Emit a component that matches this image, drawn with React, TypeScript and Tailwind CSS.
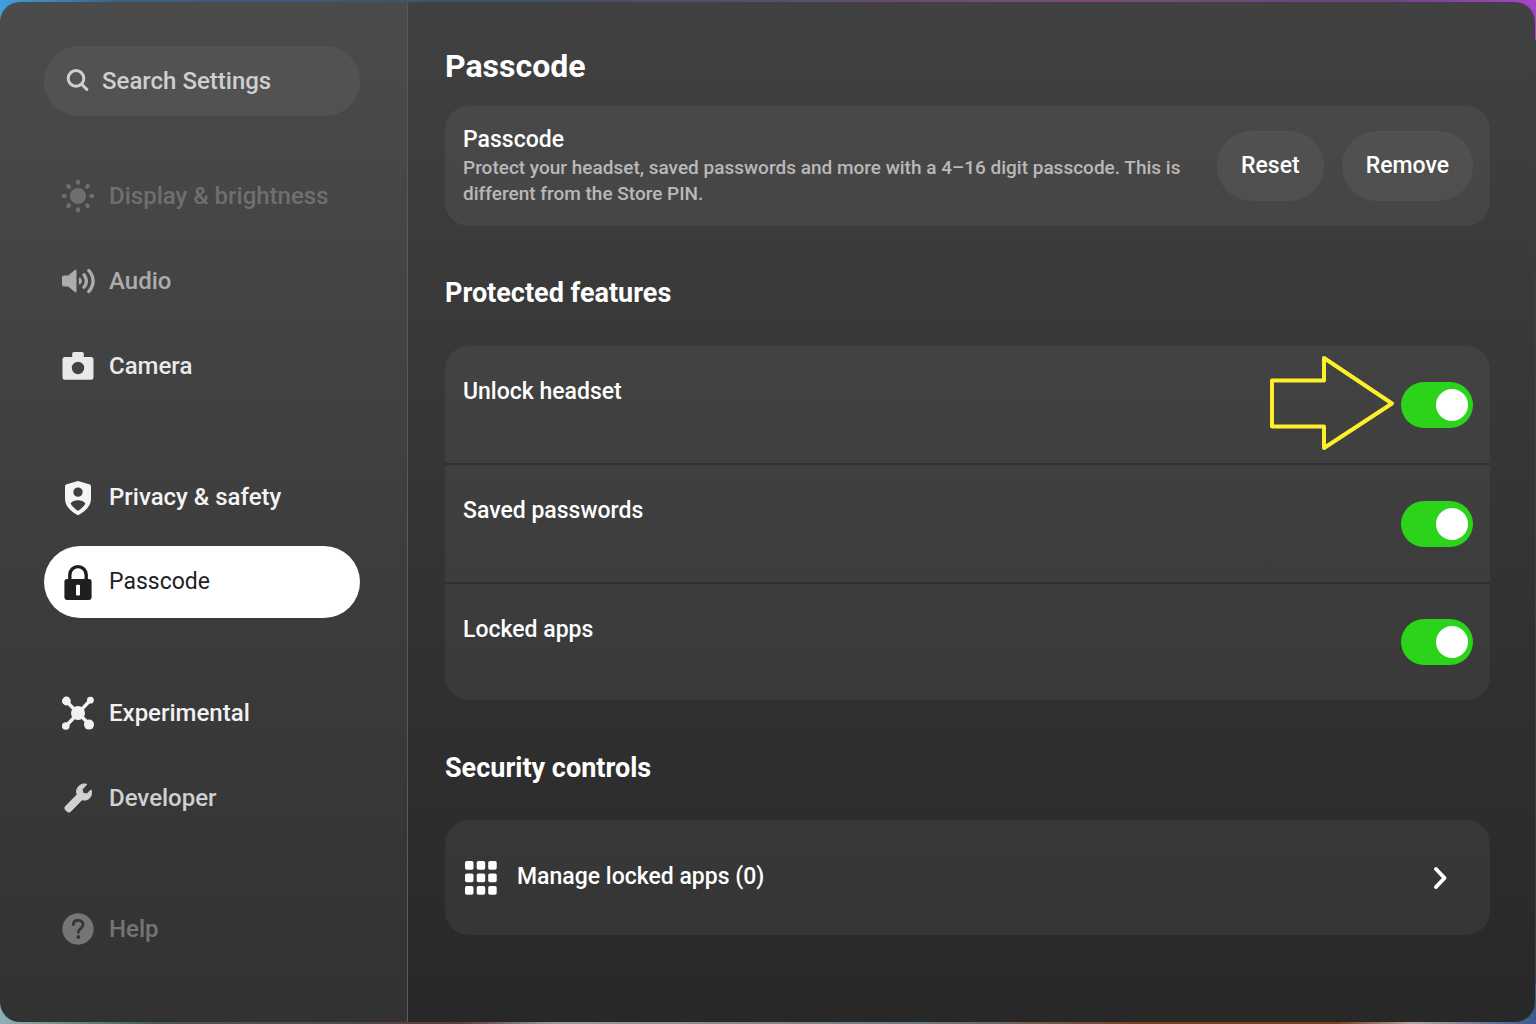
import { useState, type ReactNode } from "react";

type NavItem = { label: string; icon: ReactNode; tone: string; active?: boolean };

const SunIcon = () => (
  <svg viewBox="0 0 32 32" className="size-8 shrink-0 overflow-visible" aria-hidden="true">
    <circle cx="16" cy="16" r="8" fill="currentColor" />
    <path
      d="M16 1.600v1.200M16 29.200v1.200M1.600 16h1.200M29.200 16h1.200M6.200 6l.8.8M25 6.800l.8-.8M6.200 26l.8-.8M25 25.200l.8.8"
      stroke="currentColor"
      strokeWidth="4"
      strokeLinecap="round"
    />
  </svg>
);

const AudioIcon = () => (
  <svg viewBox="0 0 32 32" className="size-8 shrink-0 overflow-visible" aria-hidden="true">
    <path
      d="M2 10.500h4.200l6.600-5.600c.9-.7 1.700-.4 1.700.8v20.600c0 1.200-.8 1.500-1.700.8l-6.600-5.600H2c-1.200 0-2-.8-2-2v-7c0-1.200.8-2 2-2z"
      fill="currentColor"
    />
    <path d="M17.800 13.400a3.400 3.400 0 0 1 0 5.200z" fill="currentColor" stroke="currentColor" strokeWidth="1.800" strokeLinejoin="round" />
    <path
      d="M22 9.800c3.200 3.600 3.200 8.800 0 12.400M26.800 5.500c5.700 6.500 5.700 14.500 0 21"
      fill="none"
      stroke="currentColor"
      strokeWidth="3.400"
      strokeLinecap="round"
    />
  </svg>
);

const CameraIcon = () => (
  <svg viewBox="0 0 32 32" className="size-8 shrink-0" aria-hidden="true">
    <path
      fill="currentColor"
      fillRule="evenodd"
      d="M12 2h8a1.800 1.800 0 0 1 1.800 1.800V7H29a2.500 2.500 0 0 1 2.500 2.500v17.700a2.500 2.500 0 0 1-2.500 2.500H3A2.500 2.500 0 0 1 .5 27.200V9.500A2.500 2.500 0 0 1 3 7h7.200V3.800A1.800 1.800 0 0 1 12 2zm4 9.800a6.200 6.200 0 1 0 0 12.400 6.200 6.200 0 0 0 0-12.400z"
    />
  </svg>
);

const ShieldIcon = () => (
  <svg viewBox="0 0 32 32" className="size-8 shrink-0 overflow-visible" aria-hidden="true">
    <path
      fill="currentColor"
      fillRule="evenodd"
      d="M16 0 27.200 3.200c1.200.4 1.800 1 1.800 2.200v12.400c0 7.600-6 12.800-13 16.400-7-3.600-13-8.800-13-16.400V5.400c0-1.200.6-1.800 1.800-2.200zM16 6.400a4.700 4.700 0 1 0 0 9.400 4.700 4.700 0 0 0 0-9.400zM8.600 22.600c1.600 3.100 4.200 5.300 7.400 7.100 3.200-1.800 5.800-4 7.400-7.100-1.500-2.200-4.200-3.300-7.400-3.300S10.100 20.400 8.600 22.600z"
    />
  </svg>
);

const LockIcon = () => (
  <svg viewBox="0 0 32 32" className="size-8 shrink-0 overflow-visible" aria-hidden="true">
    <path d="M7.800 14V8.800a8.200 8.200 0 0 1 16.400 0V14" fill="none" stroke="currentColor" strokeWidth="3.400" />
    <path
      fill="currentColor"
      fillRule="evenodd"
      d="M5 13h22a2.600 2.600 0 0 1 2.600 2.600v16a2.400 2.400 0 0 1-2.400 2.400H4.800a2.400 2.400 0 0 1-2.400-2.400v-16A2.600 2.600 0 0 1 5 13zm9 6.800v8.700a1 1 0 0 0 1 1h2a1 1 0 0 0 1-1v-8.700a1 1 0 0 0-1-1h-2a1 1 0 0 0-1 1z"
    />
  </svg>
);

const NodesIcon = () => (
  <svg viewBox="0 0 32 32" className="size-8 shrink-0 overflow-visible" fill="currentColor" aria-hidden="true">
    <path d="M4 4l24 24M28 3.500L4 29" stroke="currentColor" strokeWidth="3.400" />
    <circle cx="16" cy="16" r="7" />
    <circle cx="4.400" cy="4" r="4.400" />
    <circle cx="28.400" cy="3.200" r="3.400" />
    <circle cx="3.800" cy="29" r="3.800" />
    <circle cx="27" cy="27.600" r="5" />
  </svg>
);

const WrenchIcon = () => (
  <svg viewBox="0 0 32 32" className="size-8 shrink-0" aria-hidden="true">
    <path
      fill="currentColor"
      stroke="currentColor"
      strokeLinejoin="round"
      d="M24.800 2.300c-3.200-1-7 .1-9 3.200-1.400 2.200-1.500 4.700-.7 7.100L3.900 23.900c-1.300 1.300-1.300 2.900-.1 4.300l1 1c1.300 1.200 2.900 1.200 4.200-.1L20 17.700c2.300.8 5 .5 7.100-1.200 2.300-2 2.900-5.400 2-8.600l-4.500 4.100-3.600-.8-.9-3.700z"
    />
  </svg>
);

const HelpIcon = () => (
  <svg viewBox="0 0 32 32" className="size-8 shrink-0" aria-hidden="true">
    <circle cx="16" cy="16" r="15.700" fill="currentColor" />
    <path
      d="M11.200 11.500c.3-2.700 2.200-4.100 4.900-4.100 2.900 0 5 1.600 5 4.100 0 3.700-4.700 4-4.700 7.800"
      fill="none"
      stroke="#363636"
      strokeWidth="2.800"
      strokeLinecap="round"
    />
    <circle cx="16.300" cy="24" r="1.900" fill="#363636" />
  </svg>
);

const navGroups: NavItem[][] = [
  [
    { label: "Display & brightness", icon: <SunIcon />, tone: "text-[#6f6f6f]" },
    { label: "Audio", icon: <AudioIcon />, tone: "text-[#acacac]" },
    { label: "Camera", icon: <CameraIcon />, tone: "text-[#e9e9e9]" },
  ],
  [
    { label: "Privacy & safety", icon: <ShieldIcon />, tone: "text-[#f4f4f4]" },
    { label: "Passcode", icon: <LockIcon />, tone: "text-[#1f1f1f]", active: true },
  ],
  [
    { label: "Experimental", icon: <NodesIcon />, tone: "text-[#f1f1f1]" },
    { label: "Developer", icon: <WrenchIcon />, tone: "text-[#d0d0d0]" },
  ],
  [{ label: "Help", icon: <HelpIcon />, tone: "text-[#757575]" }],
];

function Sidebar() {
  return (
    <aside className="w-[408px] shrink-0 border-r border-[#5a5a5a] bg-linear-to-b from-[#4b4b4b] to-[#323232] pt-11 pr-[47px] pb-14 pl-11">
      <label className="flex h-[70px] items-center gap-3 rounded-full bg-white/5 pl-[22px] text-[#cfcfcf]">
        <svg viewBox="0 0 24 24" className="size-6 shrink-0" fill="none" stroke="currentColor" strokeWidth="3" aria-hidden="true">
          <circle cx="10" cy="9.400" r="7.800" />
          <path d="M15.600 15.200l5.200 5.200" strokeLinecap="round" />
        </svg>
        <input
          type="text"
          aria-label="Search Settings"
          placeholder="Search Settings"
          className="w-full min-w-0 bg-transparent pr-6 text-2xl font-medium outline-none placeholder:text-[#cfcfcf]"
        />
      </label>
      <nav className="mt-11 flex flex-col gap-[59px]">
        {navGroups.map((group) => (
          <ul key={group[0].label} className="flex flex-col gap-[13px]">
            {group.map((item) => (
              <li key={item.label}>
                <a
                  href="#"
                  aria-current={item.active ? "page" : undefined}
                  className={`flex h-[72px] items-center gap-[15px] rounded-full pl-[18px] ${item.tone} ${
                    item.active ? "bg-white text-[23px] font-normal" : "text-2xl font-medium"
                  }`}
                >
                  {item.icon}
                  {item.label}
                </a>
              </li>
            ))}
          </ul>
        ))}
      </nav>
    </aside>
  );
}

function PointerArrow() {
  return (
    <svg viewBox="0 0 126 98" className="pointer-events-none absolute top-2 right-[95px] h-[98px] w-[126px]" aria-hidden="true">
      <path
        d="M3 26.500h52V4l68 45.500L55 94V72.500H3z"
        fill="none"
        stroke="#fdf02a"
        strokeWidth="4"
        strokeLinejoin="round"
      />
    </svg>
  );
}

function ToggleRow({ label, pointed }: { label: string; pointed?: boolean }) {
  const [on, setOn] = useState(true);
  return (
    <label className="relative flex h-[119px] items-center justify-between pr-[17px] pl-[18px] last:h-[116px]">
      <span className="self-start pt-[29px] text-[23px]/[34px] font-medium">{label}</span>
      {pointed && <PointerArrow />}
      <input
        type="checkbox"
        role="switch"
        checked={on}
        onChange={(e) => setOn(e.target.checked)}
        className="flex h-[46px] w-[72px] shrink-0 appearance-none items-center rounded-full bg-[#6b6b6b] px-[5px] before:size-8 before:rounded-full before:bg-white checked:justify-end checked:bg-[#2bd31b]"
      />
    </label>
  );
}

export default function App() {
  return (
    <div className="flex min-h-screen flex-col bg-[linear-gradient(to_right,#3f9fe0,#3b5f80_8%,#41506b_35%,#7a4a78_70%,#6b4480_90%,#a545c8),linear-gradient(to_right,#8fb0b4,#4a5a5a_10%,#5a4038_30%,#9a9a9a_36%,#6a7a85_60%,#7a4020_74%,#7a4020_87%,#b5a5a0_92%,#3a5a90)] bg-[length:100%_40px,100%_40px] bg-[position:top,bottom] bg-no-repeat bg-[#34404f] py-0.5 pr-px font-['Roboto','Liberation_Sans',sans-serif] text-white">
      <div className="flex flex-1 overflow-hidden rounded-[20px]">
        <Sidebar />
        <main className="min-w-0 flex-1 bg-linear-to-b from-[#414141] to-[#282828] pt-11 pr-[45px] pb-10 pl-[37px]">
          <h1 className="text-[32px]/10 font-bold">Passcode</h1>
          <section className="mt-5 flex h-[120px] items-center rounded-3xl bg-white/5 pr-[17px] pl-[18px]">
            <div className="min-w-0 flex-1">
              <h2 className="text-[23px]/[30px] font-medium">Passcode</h2>
              <p className="text-[19px]/[26px] font-medium text-[#b9b9b9]">
                Protect your headset, saved passwords and more with a 4–16 digit passcode. This is different from the Store PIN.
              </p>
            </div>
            <div className="ml-8 flex gap-[18px]">
              <button type="button" className="h-[70px] rounded-full bg-white/5 px-6 text-[23px] font-medium">
                Reset
              </button>
              <button type="button" className="h-[70px] rounded-full bg-white/5 px-6 text-[23px] font-medium">
                Remove
              </button>
            </div>
          </section>

          <h2 className="mt-[47px] text-[27px]/10 font-bold">Protected features</h2>
          <section className="mt-[33px] divide-y-2 divide-[#303030] overflow-hidden rounded-3xl bg-white/5">
            <ToggleRow label="Unlock headset" pointed />
            <ToggleRow label="Saved passwords" />
            <ToggleRow label="Locked apps" />
          </section>

          <h2 className="mt-12 text-[27px]/10 font-bold">Security controls</h2>
          <button type="button" className="mt-8 flex h-[115px] w-full items-center rounded-3xl bg-white/5 pr-10 pl-5 text-left text-[23px] font-medium">
            <svg viewBox="0 0 32 34" className="h-[34px] w-8 shrink-0" fill="currentColor" aria-hidden="true">
              {[0, 12.5, 25].map((y) =>
                [0, 11.7, 23.2].map((x) => <rect key={`${x}-${y}`} x={x} y={y} width="8.500" height="8.800" rx="1.800" />),
              )}
            </svg>
            <span className="ml-5 flex-1">Manage locked apps (0)</span>
            <svg viewBox="0 0 20 24" className="h-6 w-5 shrink-0" fill="none" stroke="currentColor" strokeWidth="4" strokeLinecap="round" strokeLinejoin="round" aria-hidden="true">
              <path d="M6 3l8.500 9L6 21" />
            </svg>
          </button>
        </main>
      </div>
    </div>
  );
}
